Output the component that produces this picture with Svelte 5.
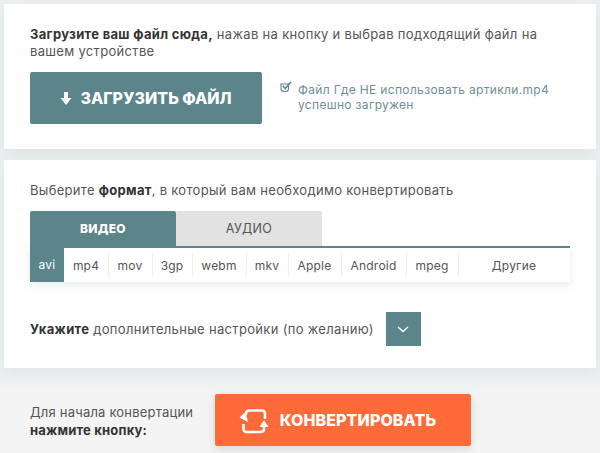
<script>
	let formats = ["avi", "mp4", "mov", "3gp", "webm", "mkv", "Apple", "Android", "mpeg", "Другие"];
	let current = "avi";
</script>

<div class="page">
	<div class="panels">
		<section class="card upload">
			<p class="lead"><b>Загрузите ваш файл сюда,</b> нажав на кнопку и выбрав подходящий файл на вашем устройстве</p>
			<div class="upload_row">
				<button class="upload_btn">
					<svg width="12" height="15" viewBox="0 0 12 15"><path d="M4 1h4v6h3.500L6 14 .5 7H4z" fill="#fff"/></svg>
					ЗАГРУЗИТЬ ФАЙЛ
				</button>
				<div class="status">
					<svg width="12" height="12" viewBox="0 0 12 12"><path d="M1 3h7.500v4.500a3 3 0 0 1-3 3h-1.500a3 3 0 0 1-3-3z" fill="none" stroke="#5b848b" stroke-width="1.100"/><path d="M2.800 4.800l2.400 2.700L11 1" fill="none" stroke="#5b848b" stroke-width="1.600"/></svg>
					<span>Файл Где НЕ использовать артикли.mp4<br />успешно загружен</span>
				</div>
			</div>
		</section>

		<section class="card convert">
			<p class="choose">Выберите <b>формат</b>, в который вам необходимо конвертировать</p>
			<div class="tabs">
				<div class="tab active">ВИДЕО</div>
				<div class="tab">АУДИО</div>
			</div>
			<ul class="formats">
				{#each formats as f}
					<li class:current={f === current}>{f}</li>
				{/each}
			</ul>
			<div class="options">
				<span><b>Укажите</b> дополнительные настройки (по желанию)</span>
				<button class="more" aria-label="Показать настройки">
					<svg width="12" height="7" viewBox="0 0 12 7"><path d="M1 1l5 4.500L11 1" fill="none" stroke="#fff" stroke-width="1.400"/></svg>
				</button>
			</div>
		</section>
	</div>

	<div class="go">
		<p>Для начала конвертации<br /><b>нажмите кнопку:</b></p>
		<button class="go_btn">
			<svg width="30" height="27" viewBox="0 0 30 27"><path d="M7 8V6.500a3 3 0 0 1 3-3H23a3 3 0 0 1 3 3V12M4.500 17v5a3 3 0 0 0 3 3H22a3 3 0 0 0 3-3v-3" fill="none" stroke="#fff" stroke-width="2.600"/><path d="M.5 10.500 6.500 5 9 15zM25 13l4.500 7H20.500z" fill="#fff"/></svg>
			КОНВЕРТИРОВАТЬ
		</button>
	</div>
</div>

<style>
	:global(body) {
		background: #f4f4f4;
		font-family: Inter, "Noto Sans", sans-serif;
		color: #555;
	}

	.page {
		width: 600px;
		height: 453px;
		overflow: hidden;
		background: linear-gradient(#ecf0f1 368px, #f4f4f4 398px);
	}

	.panels {
		padding: 4px 4px 6px;
		display: flex;
		flex-direction: column;
		gap: 11px;
	}

	.card {
		background: #fff;
		box-shadow: 0 4px 14px rgba(90, 120, 130, 0.1);
		padding: 0 26px;
		font-size: 13px;
	}

	.upload {
		height: 145px;
	}

	.lead {
		margin: 0;
		padding-top: 22px;
		line-height: 17px;
		width: 525px;
		letter-spacing: 0.32px;
	}

	b {
		color: #333;
		font-weight: 700;
	}

	.upload_row {
		display: flex;
		align-items: center;
		margin-top: 12px;
		gap: 18px;
	}

	button {
		border: none;
		color: #fff;
		font-family: inherit;
		font-weight: 800;
		display: flex;
		align-items: center;
		justify-content: center;
		border-radius: 2px;
	}

	.upload_btn {
		background: #5b848b;
		width: 232px;
		height: 52px;
		gap: 8px;
		font-size: 16px;
	}

	.status {
		display: flex;
		gap: 6px;
		color: #6c8f96;
		font-size: 12px;
		line-height: 15px;
		letter-spacing: 0.33px;
		margin-top: -2px;
	}

	.status svg {
		margin-top: -1px;
	}

	.convert {
		height: 208px;
	}

	.choose {
		margin: 0;
		padding-top: 22px;
		line-height: 17px;
		letter-spacing: 0.3px;
	}

	.tabs {
		display: flex;
		margin-top: 12px;
	}

	.tab {
		width: 146px;
		height: 35px;
		background: #e2e2e2;
		border-radius: 2px 2px 0 0;
		display: flex;
		align-items: center;
		justify-content: center;
		font-size: 12.500px;
		letter-spacing: 0.3px;
		color: #555;
	}

	.tab.active {
		background: #5b848b;
		color: #fff;
		font-weight: 800;
		font-size: 12px;
	}

	.formats {
		list-style: none;
		margin: 0;
		padding: 0;
		width: 540px;
		height: 34px;
		border-top: 2px solid #5b848b;
		display: grid;
		grid-template-columns: 34px 44px 44px 40px 54px 42px 53px 65px 52px 1fr;
		box-shadow: 0 3px 8px rgba(90, 120, 130, 0.15);
		font-size: 12px;
		letter-spacing: 0.2px;
	}

	.formats li {
		display: flex;
		align-items: center;
		justify-content: center;
		position: relative;
	}

	.formats li + li + li::before {
		content: "";
		position: absolute;
		left: 0;
		top: 5px;
		bottom: 5px;
		width: 1px;
		background: #eee;
	}

	.formats li.current {
		background: #5b848b;
		color: #fff;
		margin-top: -1px;
	}

	.options {
		display: flex;
		align-items: center;
		margin-top: 30px;
		gap: 12px;
		letter-spacing: 0.32px;
	}

	.more {
		background: #5b848b;
		width: 35px;
		height: 34px;
		border-radius: 0;
	}

	.go {
		display: flex;
		align-items: center;
		padding: 20px 0 0 30px;
	}

	.go p {
		margin: 2px 0 0;
		width: 185px;
		font-size: 13px;
		line-height: 18px;
		letter-spacing: 0.2px;
	}

	.go_btn {
		background: #ff6a39;
		width: 256px;
		height: 52px;
		gap: 11px;
		padding: 0 11px 0 0;
		font-size: 16px;
		letter-spacing: 0.1px;
		box-shadow: 0 3px 10px rgba(0, 0, 0, 0.12);
	}
</style>
